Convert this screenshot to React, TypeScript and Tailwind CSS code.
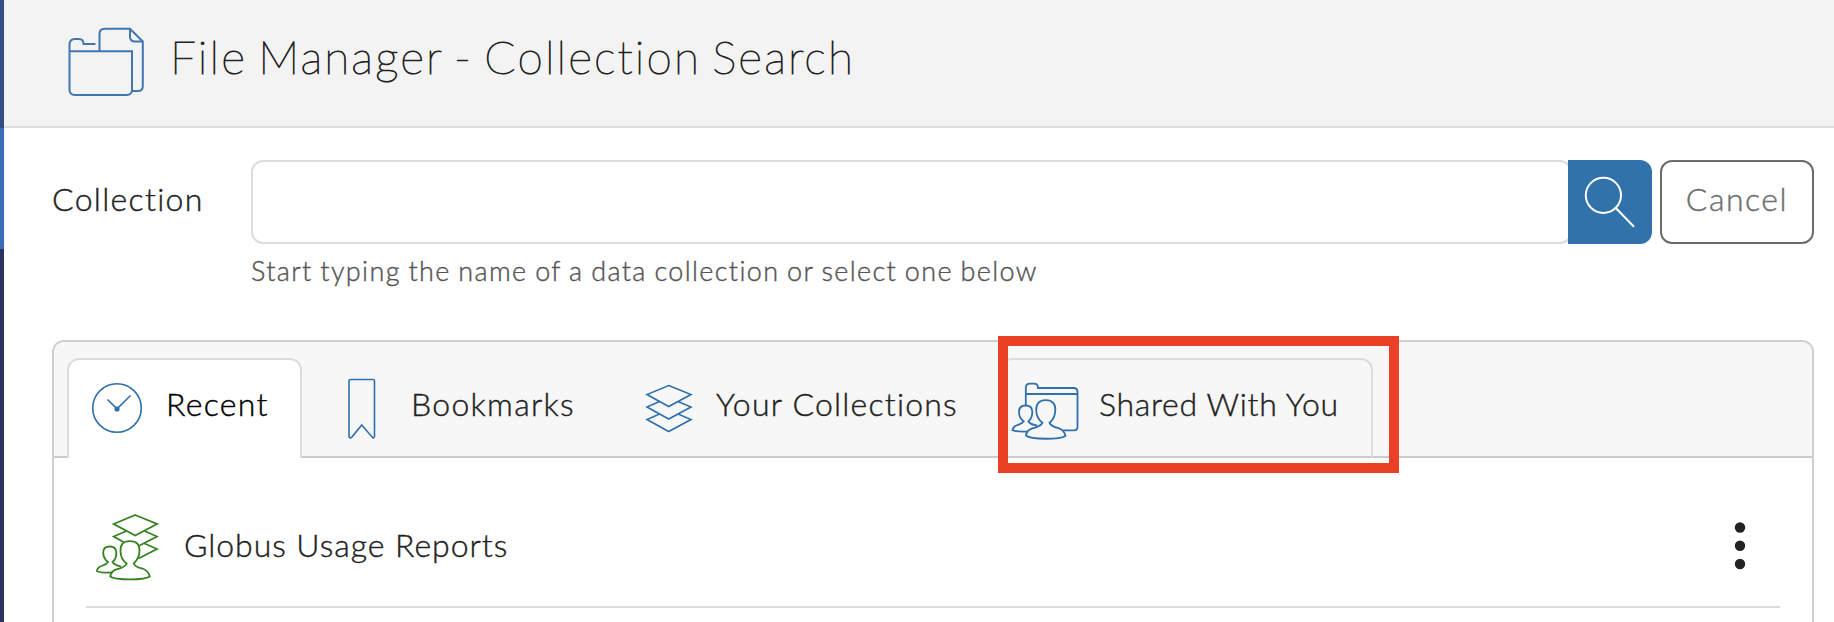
import { useState } from 'react';
import type { ReactNode } from 'react';

type Tab = {
  id: string;
  label: string;
  icon: ReactNode;
  className: string;
  labelClassName: string;
};

function FolderIcon() {
  return (
    <svg width="80" height="72" viewBox="66 26 80 72" fill="none" stroke="#4177b0" strokeWidth="2" className="shrink-0">
      <path d="M69.5 51.3H132V89.5Q132 95 126.500 95H75Q69.500 95 69.500 89.500V45Q69.500 39 75 39H79Q83.500 39 83.500 44H95.500" />
      <path d="M99.500 51V34Q99.500 28.700 105 28.700H130L142.800 41.500V86Q142.800 91 138 91H132" />
      <path d="M130 29V36.500Q130 41.500 135 41.500H142.800" />
    </svg>
  );
}

function SearchIcon() {
  return (
    <svg width="84" height="84" viewBox="0 0 84 84" fill="none" stroke="#fff" strokeWidth="2">
      <circle cx="35.400" cy="35.300" r="17.600" />
      <path d="M47.500 47.800L65.500 66.300" strokeLinecap="round" />
    </svg>
  );
}

function ClockIcon() {
  return (
    <svg width="52" height="52" viewBox="91 382 52 52" fill="none" stroke="#2f70ad" strokeWidth="1.600" className="shrink-0">
      <circle cx="117" cy="408" r="24.300" />
      <path d="M107.500 399.500L117 408.800L130.500 395.500" />
      <circle cx="117" cy="409" r="1.800" fill="#2f70ad" />
    </svg>
  );
}

function BookmarkIcon() {
  return (
    <svg width="30" height="62" viewBox="347 378 30 62" fill="none" stroke="#2f70ad" strokeWidth="1.600" className="mt-[2px] shrink-0">
      <path d="M350.500 379.500H373Q374.500 379.500 374.500 381V436.500Q374 438.500 372.500 437.500L361.700 425L351.500 437.500Q349.500 438.500 349 436.500V381Q349 379.500 350.500 379.500Z" />
    </svg>
  );
}

function LayersIcon() {
  return (
    <svg width="48" height="50" viewBox="645 384 48 50" fill="none" stroke="#2f70ad" strokeWidth="1.600" className="mt-[2px] shrink-0">
      <path d="M668.700 385.500L691 394.500L668.700 406.500L647 394.500Z" />
      <path d="M659.500 401.500L647 407L668.700 419L691 407L678 401.500" />
      <path d="M659.500 414L647 419.500L668.700 431.500L691 419.500L678 414" />
    </svg>
  );
}

function SharedIcon() {
  return (
    <svg width="70" height="60" viewBox="1010 381 70 60" fill="none" stroke="#2f70ad" strokeWidth="1.800" className="mt-[6px] shrink-0">
      <path d="M1025.800 405V388Q1025.800 383.700 1030 383.700H1034Q1038 383.700 1038 388H1073.500Q1077.500 388 1077.500 392V427Q1077.500 430.300 1074 430.300H1063" />
      <path d="M1025.800 394H1077.500" />
      <path d="M1045.700 400.200C1052.700 400.200 1055.500 404 1055.300 410C1055.200 416 1053 420 1049.500 422.700C1051 426.500 1055 427.300 1059 428.300C1063 429.500 1064.500 431.500 1065.500 436C1060 439.500 1031 440 1026 435.500C1026.500 431 1029 429.500 1033 428.200C1037 427 1041 426.300 1042.500 422.700C1038 419.500 1036.300 416 1036.200 410C1036 404 1039 400.200 1045.700 400.200Z" />
      <path d="M1037 425.500C1033.500 424.700 1030 424.500 1028.500 421.500C1031.500 418.500 1032.500 415.500 1032.300 411.500C1032.200 407.500 1029.500 405.500 1025.500 405.500C1021.500 405.500 1019 408 1019 412C1019 416 1020.500 419 1023.700 421.500C1021.500 424.700 1016.500 424.700 1014.500 426.500C1013 428 1012.700 429 1012.500 430.300C1016 432 1023 431.500 1028 431.500" />
    </svg>
  );
}

function SharedCollectionIcon() {
  return (
    <svg width="64" height="70" viewBox="95 512 64 70" fill="none" stroke="#378220" strokeWidth="1.800" className="shrink-0">
      <path d="M135.200 515L157 524L135.200 535.500L113.700 524Z" />
      <path d="M126.500 531L113.700 536.500L123.500 542M144.500 531L157 536.500L139.500 545.500" />
      <path d="M144.500 543.500L157 549L138.500 558.500" />
      <path d="M130 541.200C136.800 541.200 139.700 544.500 139.500 551C139.400 557 137 560.500 133.700 563.500C135.200 567.300 139.500 567.800 143.500 569C147.500 570.500 148.800 573 149.800 576.500C144.500 580.300 115.500 580.500 110.300 576.500C110.800 572.500 113 570.500 117 569.200C121 568 125 567.300 126.700 563.500C122.300 560.500 120.600 557 120.500 551C120.300 544.500 123 541.200 130 541.200Z" />
      <path d="M121 566.500C117.500 565.700 114 565 112.500 562C115.500 559.500 116.500 556.500 116.300 552.500C116.200 548.500 113.500 546.500 109.800 546.500C106 546.500 103.200 548.500 103.200 552.500C103.200 556.500 104.500 559.500 108 562C106 565.500 101 565.500 98.800 567.500C97.300 568.800 97 569.500 96.800 571C100.500 573 107 572.800 112.500 572.500" />
    </svg>
  );
}

const tabs: Tab[] = [
  {
    id: 'recent',
    label: 'Recent',
    icon: <ClockIcon />,
    className: 'w-[235px] border-x-2 pl-[22px]',
    labelClassName: 'ml-[23px] tracking-[1.3px]',
  },
  {
    id: 'bookmarks',
    label: 'Bookmarks',
    icon: <BookmarkIcon />,
    className: 'w-[310px] pl-[45px]',
    labelClassName: 'ml-[34px] tracking-[1.3px]',
  },
  {
    id: 'yours',
    label: 'Your Collections',
    icon: <LayersIcon />,
    className: 'w-[388px] pl-[33px]',
    labelClassName: 'ml-[23px] tracking-[1.2px]',
  },
  {
    id: 'shared',
    label: 'Shared With You',
    icon: <SharedIcon />,
    className: 'w-[373px] border-x-2 pl-[8px]',
    labelClassName: 'ml-[19px] tracking-[0.7px]',
  },
];

export default function App() {
  const [query, setQuery] = useState('');
  const [activeTab, setActiveTab] = useState('recent');

  const tabStyle = (id: string) => {
    if (id === activeTab) return 'rounded-t-xl border-t-2 border-[#dcdcdc] bg-white pb-[2px] text-black';
    if (id === 'shared') return 'rounded-t-xl border-y-2 border-[#dcdcdc] border-b-[#cbcbcb]';
    return 'border-y-2 border-t-transparent border-b-[#cbcbcb]';
  };

  return (
    <div className="flex h-[622px] w-[1834px] overflow-hidden bg-white font-['Lato',sans-serif] font-light text-[#222] [-webkit-text-stroke:0.4px]">
      {/* Edge of the side navigation */}
      <div className="flex w-1 shrink-0 flex-col">
        <div className="h-32 bg-[#344c86]"></div>
        <div className="h-[121px] bg-[#3a6fb7]"></div>
        <div className="flex-1 bg-[#2b345f]"></div>
      </div>

      <div className="min-w-0 flex-1">
        <header className="flex h-32 items-start border-b-2 border-[#dcdcdc] bg-[#f3f3f3] pl-[62px] pt-[26px]">
          <FolderIcon />
          <h1 className="-mt-px ml-[24px] whitespace-nowrap text-[46px] font-thin leading-[64px] tracking-[2.1px] [-webkit-text-stroke:1px] [word-spacing:-4px]">
            File Manager - Collection Search
          </h1>
        </header>

        <div className="pl-12 pr-5 pt-8">
          {/* Search form */}
          <form className="flex" onSubmit={(e) => e.preventDefault()}>
            <label htmlFor="collection" className="w-[199px] shrink-0 whitespace-nowrap text-[32px] leading-[78px] tracking-[1.3px]">
              Collection
            </label>
            <div className="flex-1">
              <div className="flex h-[84px]">
                <input
                  id="collection"
                  value={query}
                  onChange={(e) => setQuery(e.target.value)}
                  className="-mr-1 min-w-0 flex-1 rounded-xl border-2 border-[#dcdcdc] px-5 text-[32px] outline-none"
                />
                <button type="submit" aria-label="Search" className="relative w-[84px] rounded-r-xl bg-[#3172ab]">
                  <SearchIcon />
                </button>
                <button type="button" className="ml-2 w-[154px] rounded-xl border-2 border-[#6b6b6b] pb-1.5 text-[32px] tracking-[1.5px] text-[#6f6f6f]">
                  Cancel
                </button>
              </div>
              <p className="mb-px mt-[7px] whitespace-nowrap text-[27px] leading-10 tracking-[1.35px] text-[#555] [word-spacing:-1px]">
                Start typing the name of a data collection or select one below
              </p>
            </div>
          </form>

          {/* Collections panel */}
          <div className="mt-12 h-[300px] rounded-t-xl border-2 border-[#cfcfcf]">
            <div className="flex h-[116px] items-end rounded-t-[10px] bg-[#f7f7f7]">
              <div className="h-full w-[13px] border-b-2 border-[#cbcbcb]"></div>
              {tabs.map((tab) => (
                <button
                  key={tab.id}
                  onClick={() => setActiveTab(tab.id)}
                  className={`flex h-[100px] items-center ${tabStyle(tab.id)} ${tab.className}`}
                >
                  {tab.icon}
                  <span className={`-mt-2 whitespace-nowrap text-[32px] leading-10 ${tab.labelClassName}`}>
                    {tab.label}
                  </span>
                </button>
              ))}
              <div className="h-full flex-1 border-b-2 border-[#cbcbcb]"></div>
            </div>

            <div className="mx-8 mt-12 flex h-[102px] items-start border-b-2 border-[#dcdcdc] pl-[9px] pr-[34px] pt-[6px]">
              <SharedCollectionIcon />
              <span className="ml-[25px] mt-[13px] whitespace-nowrap text-[32px] leading-10 tracking-[0.95px]">
                Globus Usage Reports
              </span>
              <button aria-label="More" className="ml-auto mt-[9px]">
                <svg width="12" height="50" viewBox="0 0 12 50" fill="#222">
                  <circle cx="6" cy="6.500" r="5.200" />
                  <circle cx="6" cy="24.800" r="5.200" />
                  <circle cx="6" cy="43" r="5.200" />
                </svg>
              </button>
            </div>
          </div>
        </div>
      </div>

      {/* Highlight frame around the shared tab */}
      <div className="pointer-events-none absolute left-[998px] top-[336px] h-[137px] w-[401px] border-[10px] border-[#ea4025]"></div>
    </div>
  );
}
